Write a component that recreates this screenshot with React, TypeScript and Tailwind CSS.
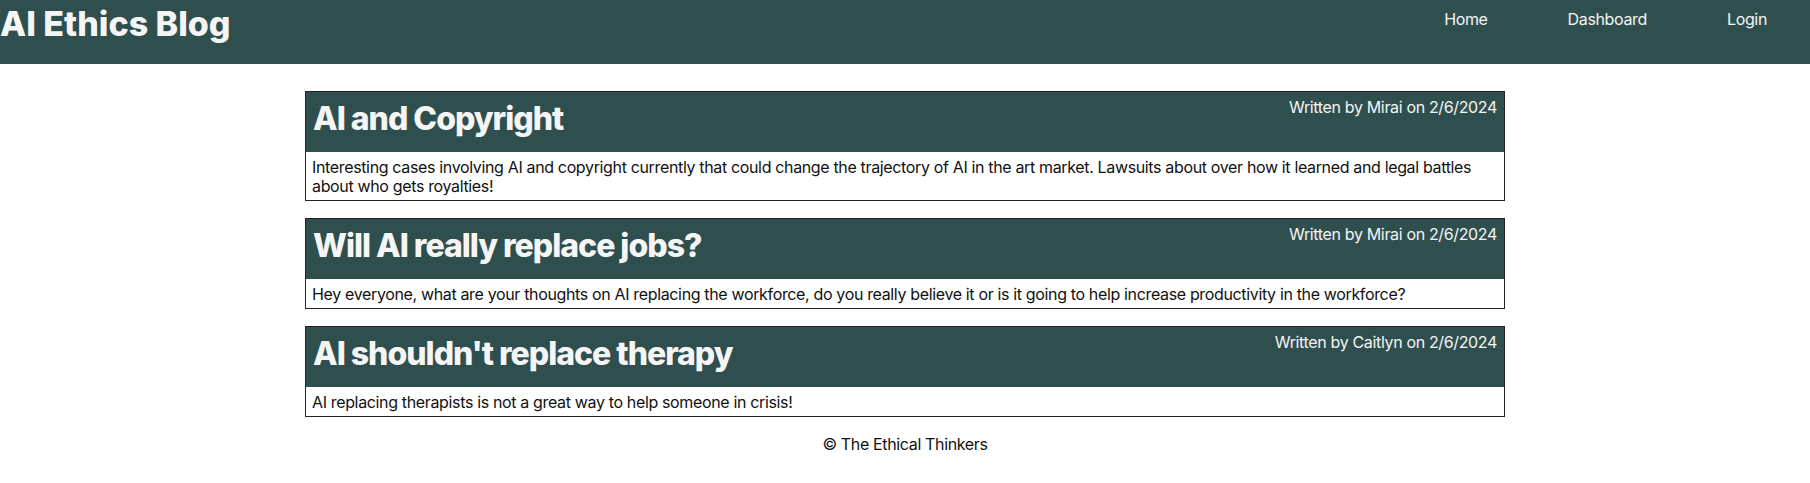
export default function App() {
  const posts = [
    {
      title: "AI and Copyright",
      author: "Mirai",
      date: "2/6/2024",
      body: "Interesting cases involving AI and copyright currently that could change the trajectory of AI in the art market. Lawsuits about over how it learned and legal battles about who gets royalties!",
    },
    {
      title: "Will AI really replace jobs?",
      author: "Mirai",
      date: "2/6/2024",
      body: "Hey everyone, what are your thoughts on AI replacing the workforce, do you really believe it or is it going to help increase productivity in the workforce?",
    },
    {
      title: "AI shouldn't replace therapy",
      author: "Caitlyn",
      date: "2/6/2024",
      body: "AI replacing therapists is not a great way to help someone in crisis!",
    },
  ]

  return (
    <div className="min-h-screen bg-white font-['Inter',sans-serif] text-[#111] tracking-[-0.35px]">
      <header className="flex h-16 items-start justify-between bg-[#2f4f4f]">
        <h1 className="mt-[4px] text-[34px] leading-[40px] font-extrabold tracking-[0px] text-[#f5f5f5]">
          AI Ethics Blog
        </h1>
        <nav className="mr-[3px] flex pt-2 text-[16px] text-[#f5f5f5]">
          <a className="px-10 leading-[22px]">Home</a>
          <a className="px-10 leading-[22px]">Dashboard</a>
          <a className="px-10 leading-[22px]">Login</a>
        </nav>
      </header>

      <main className="mx-auto mt-[27px] flex w-[1200px] flex-col gap-[17px]">
        {posts.map((post, i) => (
          <article key={i} className="border border-[#222]">
            <div className="flex h-[60px] items-start justify-between bg-[#2f4f4f] px-[7px] text-[#f5f5f5]">
              <h2 className="mt-[7px] text-[32px] leading-[40px] font-extrabold tracking-[-1px]">{post.title}</h2>
              <p className="mt-[4px] text-[16px] leading-[22px]">
                Written by {post.author} on {post.date}
              </p>
            </div>
            <p className="px-[6px] pt-[6px] pb-[4px] text-[16px] leading-[19px]">{post.body}</p>
          </article>
        ))}
      </main>

      <footer className="mt-4 text-center text-[16px] leading-[22px]">© The Ethical Thinkers</footer>
    </div>
  )
}
